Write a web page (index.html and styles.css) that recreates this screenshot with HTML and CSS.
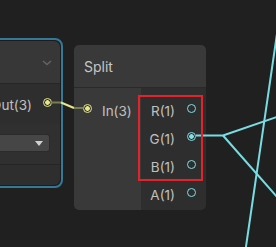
FILE: index.html
```html
<!DOCTYPE html>
<html>
  <head>
    <meta charset="utf-8">
    <title>Split node</title>
    <link rel="stylesheet" href="styles.css">
  </head>
  <body>
    <section class="graph">
        <div class="node selected" id="sourceNode">
            <div class="node-inner">
                <div class="title">
                    <svg class="chevron" width="10" height="6" viewBox="0 0 10 6"><path d="M1 1 L5 4.5 L9 1" fill="none" stroke="#646464" stroke-width="1.5"/></svg>
                </div>
                <div class="ports">
                    <div class="port-row out">
                        <span class="label">Out(3)</span>
                        <span class="port yellow connected"></span>
                    </div>
                </div>
                <div class="controls">
                    <div class="dropdown">
                        <svg width="8" height="5" viewBox="0 0 8 5"><path d="M0 0 H8 L4 5 Z" fill="#d0d0d0"/></svg>
                    </div>
                </div>
                <div class="footer"></div>
            </div>
        </div>

        <div class="node split" id="splitNode">
            <div class="title">Split</div>
            <div class="body">
                <div class="inputs">
                    <div class="port-row in">
                        <span class="port yellow connected"></span>
                        <span class="label">In(3)</span>
                    </div>
                </div>
                <div class="outputs">
                    <div class="port-row out">
                        <span class="label">R(1)</span>
                        <span class="port cyan"></span>
                    </div>
                    <div class="port-row out">
                        <span class="label">G(1)</span>
                        <span class="port cyan connected"></span>
                    </div>
                    <div class="port-row out">
                        <span class="label">B(1)</span>
                        <span class="port cyan"></span>
                    </div>
                    <div class="port-row out">
                        <span class="label">A(1)</span>
                        <span class="port cyan"></span>
                    </div>
                </div>
            </div>
        </div>

        <svg class="edges" width="276" height="247" viewBox="0 0 276 247">
            <!-- yellow edge, stubs are dimmer -->
            <path d="M50.5 102.5 H61" stroke="#7c7c52" stroke-width="2" fill="none"/>
            <path d="M61 102.5 L74 108" stroke="#e6e68a" stroke-width="2" fill="none"/>
            <path d="M74 108 H83.5" stroke="#7c7c52" stroke-width="2" fill="none"/>
            <!-- cyan edges -->
            <path d="M196 135.5 H223 L278 116.5" stroke="#78dde2" stroke-width="2" fill="none" stroke-linejoin="round"/>
            <path d="M223 135.5 L278 198" stroke="#78dde2" stroke-width="2" fill="none"/>
            <path d="M279 20 L245.5 250" stroke="#78dde2" stroke-width="2" fill="none"/>
        </svg>

        <div class="highlight"></div>
    </section>
  </body>
</html>
```

FILE: styles.css
```css
body {
    margin: 0;
    background: #202020;
    font-family: Inter, "Noto Sans", sans-serif;
    overflow: hidden;
}
.graph {
    position: relative;
    width: 276px;
    height: 247px;
    overflow: hidden;
}
.node {
    position: absolute;
    box-sizing: border-box;
}
.edges {
    position: absolute;
    left: 0;
    top: 0;
    z-index: 2;
}
.highlight {
    position: absolute;
    left: 138px;
    top: 95px;
    width: 65px;
    height: 86px;
    box-sizing: border-box;
    border: 2px solid #e3222b;
    z-index: 3;
}

/* selected node on the left, mostly off screen */
.selected {
    left: -60px;
    top: 38px;
    width: 123px;
    height: 150px;
    border: 2px solid #35789a;
    border-radius: 8px;
    padding: 1px;
    background: #1c1c1c;
}
.node-inner {
    height: 100%;
    border-radius: 6px;
    overflow: hidden;
    display: flex;
    flex-direction: column;
}
.selected .title {
    height: 42px;
    background: #373737;
    border-bottom: 1px solid #262626;
    display: flex;
    justify-content: flex-end;
    align-items: center;
    padding-right: 8px;
}
.chevron {
    margin-top: 1px;
}
.selected .ports {
    height: 40px;
    background: #2e2e2e;
}
.selected .ports .port-row {
    height: 37px;
    justify-content: flex-end;
    padding-right: 8px;
}
.controls {
    height: 40px;
    background: #303030;
    display: flex;
    align-items: center;
    justify-content: flex-end;
    padding-right: 10px;
}
.dropdown {
    width: 90px;
    height: 18px;
    margin-top: -2px;
    box-sizing: border-box;
    background: #464646;
    border: 1px solid #2b2b2b;
    border-radius: 3px;
    display: flex;
    align-items: center;
    justify-content: flex-end;
    padding-right: 6px;
}
.footer {
    flex: 1;
    border-top: 1px solid #252525;
    background: #2e2e2e;
}

/* split node */
.split {
    left: 74px;
    top: 45px;
    width: 132px;
    height: 165px;
    border-radius: 5px;
    overflow: hidden;
    display: flex;
    flex-direction: column;
}
.split .title {
    height: 42px;
    background: #393939;
    border-bottom: 1px solid #2a2a2a;
    color: #c6c6c6;
    font-size: 14px;
    display: flex;
    align-items: center;
    padding-left: 10px;
}
.body {
    flex: 1;
    display: flex;
}
.inputs {
    width: 67px;
    background: #393939;
    padding-top: 6px;
}
.outputs {
    flex: 1;
    background: #2e2e2e;
    padding-top: 6px;
}
.port-row {
    display: flex;
    align-items: center;
    height: 28px;
}
.inputs .port-row {
    padding-left: 9px;
    gap: 10px;
}
.outputs .port-row {
    justify-content: flex-end;
    padding-right: 10px;
    gap: 12px;
}
.label {
    color: #c0c0c0;
    font-size: 13.5px;
    padding-top: 5px;
}
.selected .label {
    margin-right: 11px;
}
.port {
    width: 7px;
    height: 7px;
    border-radius: 50%;
    border: 1.5px solid;
    flex: none;
}
.yellow {
    border-color: #e6e68a;
    color: #e6e68a;
}
.cyan {
    border-color: #7fe0e6;
    color: #7fe0e6;
}
.connected {
    background: radial-gradient(circle, currentColor 0 2px, transparent 2.6px);
}
```
